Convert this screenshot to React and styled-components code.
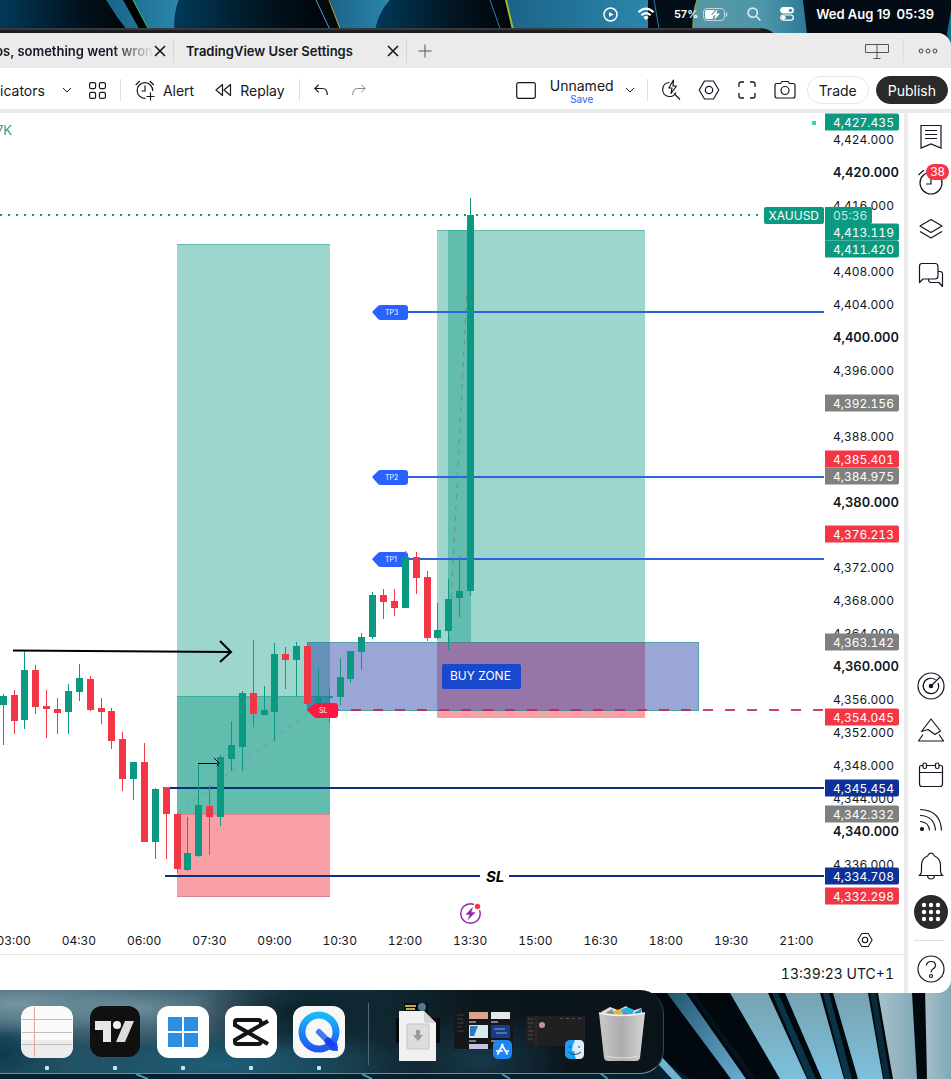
import styled, { createGlobalStyle } from "styled-components";

const UP = "#0b9981";
const DOWN = "#f23645";

// x, high, body top, body bottom, low, rising
const candles = [
  [3, 694, 696, 705, 745, 1],
  [14, 690, 695, 721, 734, 0],
  [24, 651, 670, 720, 729, 1],
  [35, 665, 670, 707, 714, 0],
  [46, 690, 706, 709, 738, 0],
  [57, 698, 709, 713, 734, 0],
  [68, 684, 691, 712, 734, 1],
  [79, 664, 678, 692, 701, 1],
  [90, 676, 679, 710, 711, 0],
  [101, 698, 708, 712, 724, 0],
  [111, 708, 711, 741, 749, 0],
  [122, 732, 739, 779, 791, 0],
  [133, 762, 762, 779, 800, 1],
  [144, 743, 762, 842, 842, 0],
  [155, 788, 789, 842, 859, 1],
  [166, 787, 787, 814, 859, 0],
  [177, 813, 814, 869, 873, 0],
  [187, 817, 853, 870, 871, 1],
  [198, 763, 805, 856, 857, 1],
  [209, 785, 806, 817, 855, 0],
  [220, 755, 757, 817, 826, 1],
  [231, 721, 745, 759, 771, 1],
  [242, 691, 693, 747, 771, 1],
  [253, 640, 693, 714, 727, 0],
  [264, 686, 710, 715, 715, 1],
  [274, 643, 654, 712, 741, 1],
  [285, 647, 654, 660, 689, 0],
  [296, 642, 646, 660, 697, 1],
  [307, 642, 646, 704, 708, 0],
  [318, 668, 696, 705, 708, 1],
  [329, 688, 696, 698, 722, 1],
  [340, 658, 677, 697, 705, 1],
  [350, 651, 651, 679, 683, 1],
  [361, 633, 637, 652, 670, 1],
  [372, 592, 595, 637, 639, 1],
  [383, 589, 595, 602, 619, 0],
  [394, 589, 601, 608, 616, 0],
  [405, 551, 557, 608, 608, 1],
  [416, 552, 557, 578, 594, 0],
  [427, 571, 577, 638, 641, 0],
  [437, 603, 630, 638, 639, 1],
  [448, 579, 599, 631, 650, 1],
  [459, 556, 591, 598, 617, 1],
  [470, 198, 215, 591, 596, 1],
];

const ticks = [
  4424, 4420, 4416, 4408, 4404, 4400, 4396, 4388, 4380, 4372, 4368, 4364, 4360,
  4356, 4352, 4348, 4344, 4340, 4336,
];

const priceTags = [
  { text: "4,427.435", y: 9, color: UP },
  { text: "4,413.119", y: 119, color: UP },
  { text: "4,411.420", y: 136, color: UP },
  { text: "4,392.156", y: 290, color: "#808080" },
  { text: "4,385.401", y: 346, color: DOWN },
  { text: "4,384.975", y: 363, color: "#808080" },
  { text: "4,376.213", y: 421, color: DOWN },
  { text: "4,363.142", y: 529, color: "#808080" },
  { text: "4,354.045", y: 604, color: DOWN },
  { text: "4,345.454", y: 675, color: "#0c3299" },
  { text: "4,342.332", y: 701, color: "#808080" },
  { text: "4,334.708", y: 763, color: "#0c3299" },
  { text: "4,332.298", y: 783, color: DOWN },
];

const times = [
  "03:00", "04:30", "06:00", "07:30", "09:00", "10:30", "12:00",
  "13:30", "15:00", "16:30", "18:00", "19:30", "21:00",
];

const targets = [
  { name: "TP3", y: 312 },
  { name: "TP2", y: 477 },
  { name: "TP1", y: 559 },
];

const priceToY = (price) => Math.round(59 + (4420 - price) * 8.2375);
const formatPrice = (price) => `4,${price - 4000}.000`;

function Wallpaper() {
  return (
    <Backdrop viewBox="0 0 951 1079" preserveAspectRatio="none" aria-hidden="true">
      <defs>
        <linearGradient id="deep" x1="0" x2="1">
          <stop offset="0" stopColor="#003a58" />
          <stop offset=".6" stopColor="#02131f" />
          <stop offset="1" stopColor="#000407" />
        </linearGradient>
        <linearGradient id="band" x1="0" x2="1">
          <stop offset="0" stopColor="#1b6389" />
          <stop offset="1" stopColor="#2b86ab" />
        </linearGradient>
        <linearGradient id="mist" x1="0" x2="1">
          <stop offset="0" stopColor="#5897a4" />
          <stop offset=".6" stopColor="#4d96aa" />
          <stop offset="1" stopColor="#2a7797" />
        </linearGradient>
        <linearGradient id="ray" x1="0" y1="0" x2="0" y2="1">
          <stop offset="0" stopColor="#77a3b2" />
          <stop offset="1" stopColor="#7cc0dc" />
        </linearGradient>
        <linearGradient id="pale" x1="0" x2="1">
          <stop offset="0" stopColor="#a8c0c8" />
          <stop offset="1" stopColor="#7fa9b8" />
        </linearGradient>
        <linearGradient id="steel" x1="0" y1="0" x2="1" y2="1">
          <stop offset="0" stopColor="#23566e" />
          <stop offset="1" stopColor="#69aed3" />
        </linearGradient>
      </defs>
      <rect width="951" height="1079" fill="#01080e" />
      <rect width="130" height="34" fill="url(#deep)" />
      <path d="M106 0H179Q173 14 175 34H130Q117 18 106 0Z" fill="url(#band)" />
      <path d="M175 34Q173 14 179 0H316L332 34Z" fill="url(#deep)" />
      <path d="M330 0H390Q377 14 375 34H340Z" fill="url(#band)" />
      <path d="M375 34Q377 14 390 0H507L514 34Z" fill="url(#deep)" />
      <path d="M123 0H133L151 34H142Z" fill="#000" />
      <path d="M133 0L151 34" stroke="#40c463" />
      <path d="M316 0H329L342 34H332Z" fill="#05090a" />
      <path d="M316 0L332 34" stroke="#4d9fdb" />
      <path d="M329 0L342 34" stroke="#c9a63a" />
      <path d="M506 0H648V34H514Z" fill="url(#band)" />
      <path d="M506 0L514 34" stroke="#96bd33" strokeWidth="2" />
      <path d="M490 0L502 34" stroke="#357fae" />
      <path d="M648 0H697L693 34H661Z" fill="#020e18" />
      <path d="M654 0L660 34" stroke="#2e7ea8" />
      <path d="M697 0H803L810 34H693Q692 12 697 0Z" fill="url(#mist)" />
      <path d="M697 0Q692 12 693 34" stroke="#8aa636" fill="none" />
      <path d="M803 0H951V60H810Z" fill="#030c14" />
      <path d="M951 10V50L947 34Z" fill="#1c6e90" />

      <path d="M0 1060H663L690 1079H0Z" fill="#06202e" />
      <path d="M136 1074L148 1079M362 1074L372 1079M502 1074L510 1079M600 1073L608 1079" stroke="#4d93ad" strokeWidth="2" />
      <path d="M661 1056L682 1079H672L658 1064Z" fill="#6fb3cf" />
      <path d="M667 993H686L746 1079H731Z" fill="url(#steel)" />
      <path d="M730 993H768L807 1079H780Z" fill="url(#ray)" />
      <path d="M785 993H820L844 1079H822Z" fill="url(#ray)" />
      <path d="M833 993H868L883 1079H858Z" fill="url(#ray)" />
      <path d="M878 993H912L917 1079H893Z" fill="url(#pale)" />
      <path d="M924 940H951V1079H927Z" fill="url(#pale)" />
      <path d="M772 993H778L816 1079H808Z" fill="#0a3448" />
      <path d="M823 993H829L852 1079H845Z" fill="#0a3448" />
      <path d="M870 993H876L890 1079H884Z" fill="#082b3b" />
      <path d="M690 993H694L756 1079H750Z" fill="#04141f" />
      <path d="M0 34V28H758Q770 28 774 34Z" fill="#1b1c20" />
      <path d="M0 29H760" stroke="#55585d" fill="none" />
    </Backdrop>
  );
}

function Plot() {
  return (
    <PlotSvg role="img" aria-label="XAUUSD candlestick chart">
      <g transform="translate(0 -113)">
        <path d="M0 215H470M476 215H764" stroke={UP} strokeWidth="2" strokeDasharray="2 6" />

        <rect x="177" y="244" width="153" height="570" fill={UP} fillOpacity=".4" />
        <rect x="177" y="696" width="153" height="118" fill={UP} fillOpacity=".4" />
        <rect x="177" y="814" width="153" height="83" fill={DOWN} fillOpacity=".47" />
        <path d="M177 244.500H330M177 696.500H330" stroke={UP} strokeOpacity=".4" />
        <path d="M177 814.500H330M177 896.500H330" stroke="#b06a76" strokeOpacity=".5" />

        <rect x="437" y="230" width="208" height="412" fill={UP} fillOpacity=".4" />
        <rect x="448" y="230" width="23" height="412" fill={UP} fillOpacity=".4" />
        <rect x="437" y="642" width="208" height="76" fill={DOWN} fillOpacity=".47" />
        <path d="M437 230.500H645" stroke={UP} strokeOpacity=".4" />

        <rect x="307" y="642" width="392" height="69" fill="#2844a8" fillOpacity=".47" />
        <path d="M307 642.500H698.500V710.500H307" stroke={UP} strokeOpacity=".5" fill="none" />
        <line x1="338" x2="100%" y1="710" y2="710" stroke="#c41f50" strokeOpacity=".85" strokeWidth="2" strokeDasharray="10 12" strokeDashoffset="-13" />

        <path d="M177 813L330 696" stroke="#8b8f8f" strokeDasharray="5 5" />
        <path d="M449 642L470 230" stroke="#6f8f8a" strokeDasharray="5 6" />

        <line x1="170" x2="100%" y1="788" y2="788" stroke="#0d2f80" strokeWidth="2" />
        <path d="M165 876H480" stroke="#0d2f80" strokeWidth="2" />
        <line x1="509" x2="100%" y1="876" y2="876" stroke="#0d2f80" strokeWidth="2" />
        <SlText x="486" y="882">SL</SlText>

        {targets.map((t) => (
          <g key={t.name}>
            <line x1="405" x2="100%" y1={t.y} y2={t.y} stroke="#2f62e0" strokeWidth="2" />
            <path
              d={`M372 ${t.y}L378 ${t.y - 6}Q379 ${t.y - 7} 381 ${t.y - 7}H405Q408 ${t.y - 7} 408 ${t.y - 4}V${t.y + 5}Q408 ${t.y + 8} 405 ${t.y + 8}H381Q379 ${t.y + 8} 378 ${t.y + 7}Z`}
              fill="#2962ff"
            />
            <TagText x="385" y={t.y + 3}>{t.name}</TagText>
          </g>
        ))}

        {candles.map(([x, high, top, bottom, low, rising]) => (
          <g key={x} fill={rising ? UP : DOWN}>
            <rect x={x} y={high} width="1" height={low - high} />
            <rect x={x - 3} y={top} width="7" height={Math.max(bottom - top, 1)} />
          </g>
        ))}

        <path d="M307 710L314 704Q315 703 317 703H335Q338 703 338 706V715Q338 718 335 718H317Q315 718 314 717Z" fill="#ff1744" />
        <TagText x="319" y="713">SL</TagText>

        <path d="M13 650.500L231 652M220 641L231 652L220 662" stroke="#000" strokeWidth="2" fill="none" />
        <path d="M198 763.500H217M214 758L219 763L217 766" stroke="#000" fill="none" />

        <rect x="442" y="664" width="79" height="25" rx="2" fill="#1848cc" />
        <ZoneText x="450" y="680">BUY ZONE</ZoneText>

        <circle cx="470.500" cy="913.500" r="9.800" fill="none" stroke="#8e24aa" strokeWidth="1.400" />
        <circle cx="477.500" cy="906.500" r="4" fill="#fff" />
        <circle cx="477.500" cy="906.500" r="2.700" fill="#f23645" />
        <path d="M472.500 907.500L466 914.500H470L468 919.500L475 912.500H471Z" fill="#8e24aa" stroke="#8e24aa" strokeWidth=".5" />
        <rect x="812" y="121" width="4" height="4" fill="#3fd69b" />
      </g>
    </PlotSvg>
  );
}

const Gear = ({ size = 22 }) => (
  <Glyph width={size} height={size} viewBox="0 0 22 22" $weight={size < 20 ? 1.5 : 1.2}>
    <path d="M6.500 2H15.500L20.800 11L15.500 20H6.500L1.200 11Z" strokeLinejoin="round" />
    <circle cx="11" cy="11" r="3.700" />
  </Glyph>
);

const Chevron = () => (
  <Glyph width="10" height="10" viewBox="0 0 10 10">
    <path d="M1 3L5 7L9 3" />
  </Glyph>
);

const Close = () => (
  <Glyph width="12" height="12" viewBox="0 0 12 12" $weight={1.6}>
    <path d="M1 1L11 11M11 1L1 11" />
  </Glyph>
);

function MenuBar() {
  return (
    <Menu>
      <Glyph width="15" height="15" viewBox="0 0 15 15" $color="#fff" $weight={1.5}>
        <circle cx="7.500" cy="7.500" r="6.500" />
        <path d="M6 5L10.500 7.500L6 10Z" fill="#fff" stroke="none" />
      </Glyph>
      <Glyph width="18" height="14" viewBox="0 0 18 14" $color="#fff" $weight={2.2}>
        <path d="M1.500 5.200Q9 -2 16.500 5.200M4.400 8.300Q9 4 13.600 8.300" />
        <path d="M6.300 10.200Q9 8 11.700 10.200L9 13Z" fill="#fff" stroke="none" />
      </Glyph>
      <Charge>
        57%
        <Glyph width="25" height="13" viewBox="0 0 25 13" $color="#b9d5de">
          <rect x=".5" y=".5" width="21" height="12" rx="3.500" />
          <path d="M2 4Q2 2 4 2H12L8 7H11L9.500 11H4Q2 11 2 9Z" fill="#fff" stroke="none" />
          <path d="M14.500 1L9 7.200H12.500L11 12L17 5.500H13.500Z" fill="#fff" stroke="none" />
          <path d="M23.500 4.500V8.500" strokeWidth="1.500" />
        </Glyph>
      </Charge>
      <Glyph width="14" height="14" viewBox="0 0 14 14" $color="#d5e8ee" $weight={1.7}>
        <circle cx="5.700" cy="5.700" r="4.600" />
        <path d="M9 9L13.300 13.300" />
      </Glyph>
      <Glyph width="14" height="14" viewBox="0 0 14 14" $color="#fff" $weight={1.2}>
        <rect x=".7" y=".7" width="12.600" height="5.200" rx="2.600" fill="#fff" />
        <rect x=".7" y="8" width="12.600" height="5.200" rx="2.600" />
        <circle cx="10.400" cy="3.300" r="1.600" fill="#3a87a0" stroke="none" />
        <circle cx="3.600" cy="10.600" r="2" fill="#fff" stroke="none" />
      </Glyph>
      <Clock>
        <span>Wed Aug 19</span>
        <span>05:39</span>
      </Clock>
    </Menu>
  );
}

function TabBar() {
  return (
    <Tabs>
      <Tab>
        <FadedTitle>ps, something went wrong</FadedTitle>
        <IconButton aria-label="Close tab"><Close /></IconButton>
      </Tab>
      <Tab $wide>
        <TabTitle>TradingView User Settings</TabTitle>
        <IconButton aria-label="Close tab"><Close /></IconButton>
      </Tab>
      <NewTab aria-label="New tab">
        <Glyph width="14" height="14" viewBox="0 0 14 14" $color="#555">
          <path d="M7 .5V13.500M.5 7H13.500" />
        </Glyph>
      </NewTab>
      <TabTools>
        <IconButton aria-label="Layout sync">
          <Glyph width="24" height="16" viewBox="0 0 24 16" $color="#555">
            <path d="M.5 1.500H23.500V9.500H.5ZM12 1.500V15.500M8.500 15.500H15.500" />
          </Glyph>
        </IconButton>
        <Divider $space={14} $tall />
        <IconButton aria-label="More">
          <Glyph width="20" height="6" viewBox="0 0 20 6" $color="#444">
            <circle cx="3" cy="3" r="2" />
            <circle cx="10" cy="3" r="2" />
            <circle cx="17" cy="3" r="2" />
          </Glyph>
        </IconButton>
      </TabTools>
    </Tabs>
  );
}

function Toolbar() {
  return (
    <Tools>
      <ToolGroup $gap={17}>
        <ToolButton>icators</ToolButton>
        <IconButton aria-label="Favourite indicators"><Chevron /></IconButton>
        <IconButton aria-label="Templates">
          <Glyph width="17" height="17" viewBox="0 0 17 17" $weight={1.2}>
            <rect x=".6" y=".6" width="6" height="6" rx="1.500" />
            <rect x="10.400" y=".6" width="6" height="6" rx="1.500" />
            <rect x=".6" y="10.400" width="6" height="6" rx="1.500" />
            <rect x="10.400" y="10.400" width="6" height="6" rx="1.500" />
          </Glyph>
        </IconButton>
      </ToolGroup>
      <Divider $space={14} />
      <ToolGroup $gap={21}>
        <ToolButton>
          <Glyph width="20" height="21" viewBox="0 0 20 21" $weight={1.2}>
            <path d="M10.500 18.300A7.800 7.800 0 1 1 17.700 11M10 5.500V11H6.500M.7 5L4.700 1M14.800 1L18.800 5M15.500 12.500V20.500M11.500 16.500H19.500" />
          </Glyph>
          Alert
        </ToolButton>
        <ToolButton>
          <Glyph width="17" height="14" viewBox="0 0 17 14" $weight={1.2}>
            <path d="M7.500 1.500V12.500L1 7ZM15.500 1.500V12.500L9 7Z" strokeLinejoin="round" />
          </Glyph>
          Replay
        </ToolButton>
      </ToolGroup>
      <Divider $space={14} />
      <ToolGroup $gap={24}>
        <IconButton aria-label="Undo">
          <Glyph width="14" height="12" viewBox="0 0 14 12" $weight={1.2}>
            <path d="M4.700 .7L.9 4.500L4.700 8.300M1 4.500H8.500Q13.300 4.500 13.300 11" />
          </Glyph>
        </IconButton>
        <IconButton aria-label="Redo">
          <Glyph width="14" height="12" viewBox="0 0 14 12" $color="#888">
            <path d="M9.300 .7L13.100 4.500L9.300 8.300M13 4.500H5.500Q.7 4.500 .7 11" />
          </Glyph>
        </IconButton>
      </ToolGroup>

      <ToolEnd>
        <IconButton aria-label="Select layout">
          <Glyph width="20" height="18" viewBox="0 0 20 18" $weight={1.2}>
            <rect x=".7" y="1.700" width="18.600" height="15.600" rx="2" />
          </Glyph>
        </IconButton>
        <LayoutName>
          Unnamed
          <small>Save</small>
        </LayoutName>
        <IconButton aria-label="Manage layouts"><Chevron /></IconButton>
        <Divider $space={12} />
        <ToolGroup $gap={16}>
          <IconButton aria-label="Quick search">
            <Glyph width="22" height="22" viewBox="0 0 22 22" $weight={1.2}>
              <path d="M9.500 3.500A7 7 0 1 0 16 13.500M14 14.500L20 20.500M13.500 1L8.800 9H12L11 14.500L16.500 7H13Z" strokeLinejoin="round" />
            </Glyph>
          </IconButton>
          <IconButton aria-label="Settings"><Gear /></IconButton>
          <IconButton aria-label="Fullscreen">
            <Glyph width="22" height="22" viewBox="0 0 22 22" $weight={1.3}>
              <path d="M3 8V5Q3 3 5 3H8M14 3H17Q19 3 19 5V8M19 14V17Q19 19 17 19H14M8 19H5Q3 19 3 17V14" />
            </Glyph>
          </IconButton>
          <IconButton aria-label="Take a snapshot">
            <Glyph width="22" height="22" viewBox="0 0 22 22" $weight={1.2}>
              <path d="M3 4.500H6.500L8 2.500H14L15.500 4.500H19Q21 4.500 21 6.500V17Q21 19 19 19H3Q1 19 1 17V6.500Q1 4.500 3 4.500Z" />
              <circle cx="11" cy="11.500" r="4" />
            </Glyph>
          </IconButton>
        </ToolGroup>
        <PillRow>
          <Pill>Trade</Pill>
          <Pill $dark>Publish</Pill>
        </PillRow>
      </ToolEnd>
    </Tools>
  );
}

function Sidebar() {
  return (
    <Side>
      <SideGroup>
        <SideButton aria-label="Watchlist">
          <Glyph width="22" height="26" viewBox="0 0 22 26" $weight={1.2}>
            <path d="M1 1.500H21V24L11 20L1 24ZM5 6.500H17M5 10.500H17M5 14.500H17" />
          </Glyph>
        </SideButton>
        <SideButton aria-label="Alerts">
          <Glyph width="26" height="26" viewBox="0 0 26 26" $weight={1.2}>
            <circle cx="13" cy="13" r="11" />
            <path d="M13 7V14H8M.5 5L6 0" />
          </Glyph>
          <Badge>38</Badge>
        </SideButton>
        <SideButton aria-label="Object tree">
          <Glyph width="26" height="22" viewBox="0 0 26 22" $weight={1.2}>
            <path d="M13 1.500L24 8L13 14.500L2 8ZM2 13.500L13 20L24 13.500" strokeLinejoin="round" />
          </Glyph>
        </SideButton>
        <SideButton aria-label="Chats">
          <Glyph width="26" height="26" viewBox="0 0 26 26" $weight={1.2}>
            <path d="M4 1.500H17Q20 1.500 20 4.500V14Q20 17 17 17H5L1.500 20.500V4.500Q1.500 1.500 4 1.500ZM20 9.500H22Q24.500 9.500 24.500 12V24.500L21 20.500H13Q10.500 20.500 10.500 17" strokeLinejoin="round" />
          </Glyph>
        </SideButton>
      </SideGroup>
      <SideGroup>
        <SideButton $h={45} aria-label="Screeners">
          <Glyph width="28" height="28" viewBox="0 0 28 28" $weight={1.2}>
            <circle cx="14" cy="14" r="13" />
            <path d="M18.500 7.800A7.700 7.700 0 1 0 21 11M14 14L23 5" />
            <circle cx="14" cy="14" r="1.700" fill="#131722" />
          </Glyph>
        </SideButton>
        <SideButton $h={45} aria-label="Pine editor">
          <Glyph width="28" height="26" viewBox="0 0 28 26" $weight={1.2}>
            <path d="M14 1L4.500 13.500L11 11.500L18 16.500L23.500 13ZM6 16.500L1.500 23H26.500L22 16.500" strokeLinejoin="round" />
          </Glyph>
        </SideButton>
        <SideButton $h={45} aria-label="Calendars">
          <Glyph width="26" height="28" viewBox="0 0 26 28" $weight={1.2}>
            <path d="M5 3.500H3.500Q1.500 3.500 1.500 5.500V22Q1.500 24.500 4 24.500H22Q24.500 24.500 24.500 22V5.500Q24.500 3.500 22.500 3.500H21M8.500 3.500H17.500M1.500 10.500H24.500" />
            <rect x="5" y="1" width="3.500" height="5.500" rx="1.500" />
            <rect x="17.500" y="1" width="3.500" height="5.500" rx="1.500" />
          </Glyph>
        </SideButton>
        <SideButton $h={45} aria-label="News">
          <Glyph width="24" height="26" viewBox="0 0 24 26" $weight={1.2}>
            <path d="M1 1.500Q21.500 2 22.500 22.500M1 7.500Q15.500 8 16.500 22.500M1 13.500Q10 14 10.500 22.500" />
            <circle cx="3" cy="21" r="1.500" fill="#131722" />
          </Glyph>
        </SideButton>
        <SideButton $h={45} aria-label="Notifications">
          <Glyph width="26" height="28" viewBox="0 0 26 28" $weight={1.2}>
            <path d="M1.500 23.500Q3.500 22 3.500 19V13Q4 6 9.500 4Q11 1.200 13 1.200Q15 1.200 16.500 4Q22 6 22.500 13V19Q22.500 22 24.500 23.500ZM9.500 24Q10 27 13 27Q16 27 16.500 24" />
          </Glyph>
        </SideButton>
        <SideButton $h={48} aria-label="All products">
          <svg width="34" height="34" viewBox="0 0 34 34" fill="#fff">
            <circle cx="17" cy="17" r="17" fill="#2a2a2a" />
            {[10, 17, 24].map((y) => [10, 17, 24].map((x) => <circle key={x + "-" + y} cx={x} cy={y} r="2.200" />))}
          </svg>
        </SideButton>
        <SideRule />
        <SideButton $h={48} aria-label="Help">
          <Glyph width="28" height="28" viewBox="0 0 28 28" $weight={1.2}>
            <circle cx="14" cy="14" r="13" />
            <path d="M9.500 10.500Q9.500 6.500 14 6.500Q18.500 6.500 18.500 10.200Q18.500 12.500 16 14Q14 15.300 14 17.500" />
            <circle cx="14" cy="21" r="1.500" />
          </Glyph>
        </SideButton>
      </SideGroup>
    </Side>
  );
}

function Chart() {
  return (
    <ChartPane>
      <PlotRow>
        <PlotArea>
          <Plot />
          <Legend>7K</Legend>
          <SymbolTag>XAUUSD</SymbolTag>
        </PlotArea>
        <PriceAxis>
          {ticks.map((price) => (
            <Tick key={price} $bold={price % 20 === 0} style={{ top: priceToY(price) }}>
              {formatPrice(price)}
            </Tick>
          ))}
          <Countdown>05:36</Countdown>
          {priceTags.map((tag) => (
            <PriceTag key={tag.text} $color={tag.color} style={{ top: tag.y }}>
              {tag.text}
            </PriceTag>
          ))}
        </PriceAxis>
      </PlotRow>
      <TimeRow>
        <TimeAxis>
          {times.map((time) => (
            <span key={time}>{time}</span>
          ))}
        </TimeAxis>
        <AxisSettings aria-label="Axis settings"><Gear size={16} /></AxisSettings>
      </TimeRow>
      <StatusBar>13:39:23 UTC+1</StatusBar>
    </ChartPane>
  );
}

const dockApps = [
  {
    name: "Notes",
    art: (
      <>
        <rect width="52" height="52" rx="12" fill="#fafafa" />
        <path d="M0 34H52V40Q52 52 40 52H12Q0 52 0 40Z" fill="#ececec" />
        <path d="M1 13.500H51M1 26.500H51M1 38.500H51" stroke="#bdbdbd" />
        <path d="M13.500 1V51" stroke="#e8a0a0" />
      </>
    ),
  },
  {
    name: "TradingView",
    art: (
      <>
        <rect x="1" width="50" height="51" rx="12" fill="#101010" />
        <path d="M6 15H22V36H14V24H6Z" fill="#e6e6e6" />
        <circle cx="28" cy="19" r="4" fill="#f2f2f2" />
        <path d="M36 15H45L36 36H27Z" fill="#dcdcdc" />
      </>
    ),
  },
  {
    name: "Windows App",
    art: (
      <>
        <rect width="52" height="52" rx="12" fill="#fff" />
        <path d="M11 11H25V25H11ZM27 11H41V25H27ZM11 27H25V41H11ZM27 27H41V41H27Z" fill="#2b8ee0" />
      </>
    ),
  },
  {
    name: "CapCut",
    art: (
      <>
        <rect width="52" height="52" rx="12" fill="#fff" />
        <path d="M43 15L10 34V36Q10 38 12 38H33Q36 38 36 35V34M43 38L10 19V16Q10 14 12 14H33Q36 14 36 17V19" fill="none" stroke="#151515" strokeWidth="4" />
      </>
    ),
  },
  {
    name: "QuickTime Player",
    art: (
      <>
        <defs>
          <linearGradient id="quick" x1="0" y1="0" x2="0" y2="1">
            <stop offset="0" stopColor="#18b9fa" />
            <stop offset="1" stopColor="#1f57f2" />
          </linearGradient>
        </defs>
        <rect width="52" height="52" rx="12" fill="#f7f7f8" />
        <circle cx="26" cy="26" r="17" fill="none" stroke="url(#quick)" strokeWidth="7" />
        <path d="M26 26L33 33" stroke="#3f7bf5" strokeWidth="6" strokeLinecap="round" />
        <path d="M35 35L41 41" stroke="#1d3df2" strokeWidth="7" strokeLinecap="round" />
        <path d="M36 44L45 45L44 36Z" fill="#2046f0" />
      </>
    ),
  },
];

function Dock() {
  return (
    <DockArea>
      <DockPanel>
        {dockApps.map((app) => (
          <DockApp key={app.name} href="#" aria-label={app.name}>
            <svg width="52" height="52" viewBox="0 0 52 52">{app.art}</svg>
            <Running />
          </DockApp>
        ))}
        <DockRule />
        <DockTiles>
          <a href="#" aria-label="Downloads">
            <svg width="46" height="62" viewBox="0 0 46 62">
              <rect y="15" width="44" height="25" fill="#07090b" />
              <path d="M8 0H32V12H8Z" fill="#090c10" />
              <path d="M9 3H20M10 6H19" stroke="#c5a84c" strokeWidth="2" />
              <circle cx="26" cy="4" r="4" fill="#517894" />
              <path d="M3 8H28L40 20V58H3Z" fill="#f1f1f1" />
              <path d="M28 8V18Q28 20 30 20H40Z" fill="#d4d4d4" />
              <rect x="11" y="21" width="22" height="25" rx="1" fill="#dddddd" stroke="#c5c5c5" />
              <path d="M20 27H24V32H27L22 38L17 32H20Z" fill="#9a9a9a" />
            </svg>
          </a>
          <a href="#" aria-label="App Store window">
            <svg width="60" height="56" viewBox="0 -4 60 56">
              <rect y="2" width="59" height="37" fill="#15181b" />
              <path d="M3 5H10M3 9H9M3 13H10M3 17H8M3 21H10" stroke="#3c3f42" />
              <rect x="15" y="2" width="19" height="7" fill="#d9a48c" />
              <rect x="37" y="2" width="19" height="7" fill="#e5e7e7" />
              <rect x="15" y="15" width="19" height="13" fill="#d9e8ec" />
              <path d="M16 16H24L20 26H16Z" fill="#3178b4" />
              <rect x="37" y="15" width="19" height="13" fill="#153c86" />
              <path d="M40 19H51M42 23H53" stroke="#8ca9d6" />
              <path d="M15 12H22M37 12H44M15 31H22M37 31H44" stroke="#e2e2e2" />
              <rect x="15" y="34" width="19" height="5" fill="#c5c3dd" />
              <rect x="39" y="30" width="19" height="19" rx="5" fill="#1c86f3" />
              <path d="M49 34L43.500 44.500M47.500 34L53.500 44.500M42 41H49M52 41H55" stroke="#fff" strokeWidth="1.700" />
            </svg>
          </a>
          <a href="#" aria-label="Finder window">
            <svg width="60" height="56" viewBox="0 -4 60 56">
              <rect y="6" width="59" height="30" fill="#202022" />
              <path d="M2 9H7M2 13H8M2 17H6M2 21H8M2 25H7M2 29H7" stroke="#4a4a4c" />
              <path d="M10 6V36" stroke="#333" />
              <circle cx="16" cy="15" r="3" fill="#c88e9b" />
              <path d="M34 8.500H56" stroke="#555" strokeDasharray="3 3" />
              <rect x="39" y="30" width="19" height="19" rx="5" fill="#1ca0f6" />
              <path d="M49 30H53Q58 30 58 35V44Q58 49 53 49H50Q48 44 48.500 41H46Q46 35 49 30Z" fill="#dceefa" />
              <path d="M44 36V38M53 36V38M42.500 42Q48.500 47 55 42" stroke="#0d4377" fill="none" />
            </svg>
          </a>
          <a href="#" aria-label="Bin">
            <svg width="48" height="56" viewBox="0 0 48 56">
              <defs>
                <linearGradient id="bin" x1="0" x2="1">
                  <stop offset="0" stopColor="#c9c9c9" />
                  <stop offset=".5" stopColor="#adadad" />
                  <stop offset="1" stopColor="#d5d5d5" />
                </linearGradient>
              </defs>
              <path d="M3 6L12 1L20 4L28 0L34 5L43 2L45 9L36 12H8Z" fill="#ddd" />
              <path d="M6 8L14 3L17 9Z" fill="#8b8f93" />
              <path d="M16 5L23 3L24 10H17Z" fill="#e9b62c" />
              <path d="M23 4Q29 -1 36 4L34 10H25Z" fill="#28b7d8" />
              <path d="M26 5L32 9H27Z" fill="#e8488e" />
              <path d="M36 7L44 2L42 10Z" fill="#2e8bb8" />
              <path d="M1 7Q24 12 47 7L42 52Q41 55 38 55H10Q7 55 6 52Z" fill="url(#bin)" />
              <path d="M1 7Q24 12 47 7" stroke="#f2f2f2" fill="none" strokeWidth="1.500" />
              <path d="M8 50Q24 54 40 50" stroke="#e0e0e0" fill="none" />
            </svg>
          </a>
        </DockTiles>
      </DockPanel>
    </DockArea>
  );
}

export default function App() {
  return (
    <Desktop>
      <GlobalStyle />
      <Wallpaper />
      <Screen>
        <MenuBar />
        <Window>
          <TabBar />
          <Toolbar />
          <Body>
            <Chart />
            <Sidebar />
          </Body>
        </Window>
        <Dock />
      </Screen>
    </Desktop>
  );
}

const GlobalStyle = createGlobalStyle`
  * {
    box-sizing: border-box;
  }
  body {
    margin: 0;
    background: #01080e;
    color: #131722;
    font-family: Inter, "Liberation Sans", sans-serif;
    font-size: 14px;
  }
  button {
    padding: 0;
    border: none;
    background: none;
    color: inherit;
    font: inherit;
    cursor: pointer;
  }
  svg {
    display: block;
    flex-shrink: 0;
  }
`;
const Desktop = styled.div`
  display: grid;
  min-height: 100vh;
  overflow: hidden;
`;
const Backdrop = styled.svg`
  grid-area: 1 / 1;
  width: 100%;
  height: 100%;
  min-height: 0;
  contain: size;
`;
const Screen = styled.div`
  grid-area: 1 / 1;
  display: flex;
  flex-direction: column;
  min-width: 0;
  z-index: 1;
`;
const Glyph = styled.svg`
  fill: none;
  stroke: ${(props) => props.$color || "#131722"};
  stroke-width: ${(props) => props.$weight || 1};
`;
const Menu = styled.header`
  display: flex;
  justify-content: flex-end;
  align-items: center;
  gap: 19px;
  height: 33px;
  padding: 0 17px 5px 0;
  color: #fff;
`;
const Charge = styled.div`
  display: flex;
  align-items: center;
  gap: 5px;
  font-size: 11px;
  font-weight: 600;
`;
const Clock = styled.div`
  display: flex;
  gap: 6px;
  margin-left: 3px;
  font-size: 13px;
  font-weight: 600;
`;
const Window = styled.main`
  display: flex;
  flex: 1;
  flex-direction: column;
  border-radius: 0 14px 14px 0;
  background: #ebebeb;
  overflow: hidden;
`;
const Tabs = styled.nav`
  display: flex;
  align-items: center;
  height: 35px;
  background: #ebebeb;
`;
const Tab = styled.div`
  display: flex;
  justify-content: space-between;
  align-items: center;
  width: ${(props) => (props.$wide ? "233px" : "174px")};
  height: 24px;
  padding: 0 7px 0 ${(props) => (props.$wide ? "12px" : "0")};
  border-right: 1px solid #d6d6d6;
  font-size: 13px;
  font-weight: 600;
`;
const TabTitle = styled.span`
  white-space: nowrap;
`;
const FadedTitle = styled(TabTitle)`
  width: 152px;
  text-indent: -5px;
  overflow: hidden;
  mask-image: linear-gradient(to right, #000 112px, transparent 154px);
`;
const NewTab = styled.button`
  padding: 0 11px;
`;
const TabTools = styled.div`
  display: flex;
  align-items: center;
  margin-left: auto;
  padding-right: 13px;
`;
const Divider = styled.span`
  width: 1px;
  height: ${(props) => (props.$tall ? "24px" : "22px")};
  margin: 0 ${(props) => props.$space}px;
  background: #dedede;
`;
const Tools = styled.div`
  display: flex;
  align-items: center;
  height: 41px;
  padding: 3px 3px 0 0;
  background: #fff;
`;
const ToolGroup = styled.div`
  display: flex;
  align-items: center;
  gap: ${(props) => props.$gap}px;
`;
const IconButton = styled.button`
  display: flex;
  align-items: center;
`;
const ToolButton = styled.button`
  display: flex;
  align-items: center;
  gap: 8px;
  font-size: 14px;
`;
const ToolEnd = styled.div`
  display: flex;
  align-items: center;
  margin-left: auto;
`;
const LayoutName = styled.button`
  display: flex;
  flex-direction: column;
  align-items: center;
  margin: 0 11px 0 14px;
  padding-top: 2px;
  font-size: 14px;
  line-height: 16px;

  small {
    color: #2962ff;
    font-size: 10px;
    line-height: 10px;
  }
`;
const PillRow = styled.div`
  display: flex;
  gap: 7px;
  margin-left: 11px;
`;
const Pill = styled.button`
  height: 28px;
  padding: 0 11px;
  border: 1px solid ${(props) => (props.$dark ? "#2a2a2a" : "#e6e6e6")};
  border-radius: 14px;
  background: ${(props) => (props.$dark ? "#2a2a2a" : "#fff")};
  color: ${(props) => (props.$dark ? "#fff" : "#131722")};
  font-size: 14px;
`;
const Body = styled.div`
  display: flex;
  flex: 1;
  gap: 4px;
  padding-top: 4px;
`;
const ChartPane = styled.section`
  display: flex;
  flex: 1;
  flex-direction: column;
  min-width: 0;
  background: #fff;
`;
const PlotRow = styled.div`
  display: flex;
  flex: 1;
  min-height: 813px;
`;
const PlotArea = styled.div`
  position: relative;
  flex: 1;
  min-width: 0;
  padding-right: 1px;
`;
const PlotSvg = styled.svg`
  width: 100%;
  height: 100%;
`;
const Legend = styled.span`
  position: absolute;
  top: 9px;
  left: -4px;
  color: #3d9a80;
  font-size: 13px;
  line-height: 16px;
`;
const SlText = styled.text`
  font-size: 15px;
  font-style: italic;
  font-weight: 700;
`;
const TagText = styled.text`
  fill: #fff;
  font-size: 7px;
`;
const ZoneText = styled.text`
  fill: #fff;
  font-size: 12px;
`;
const PriceAxis = styled.div`
  position: relative;
  width: 79px;
  font-size: 12px;
  font-variant-numeric: tabular-nums;
`;
const Tick = styled.span`
  position: absolute;
  left: 8px;
  font-size: ${(props) => (props.$bold ? "13px" : "12px")};
  font-weight: ${(props) => (props.$bold ? 600 : 400)};
  line-height: 17px;
  transform: translateY(-50%);
`;
const PriceTag = styled.span`
  position: absolute;
  left: 0;
  width: 74px;
  padding-left: 8px;
  border-radius: 0 2px 2px 0;
  background: ${(props) => props.$color};
  color: #fff;
  line-height: 17px;
  transform: translateY(-50%);
`;
const Countdown = styled.span`
  position: absolute;
  top: 94px;
  left: 0;
  width: 47px;
  padding-left: 8px;
  border-radius: 0 2px 2px 0;
  background: ${UP};
  color: #c4e9e1;
  line-height: 17px;
`;
const SymbolTag = styled.span`
  position: absolute;
  top: 94px;
  right: 1px;
  padding: 0 5px;
  border-radius: 2px;
  background: ${UP};
  color: #fff;
  font-size: 12px;
  line-height: 17px;
`;
const TimeRow = styled.div`
  display: flex;
  align-items: center;
  height: 29px;
  border-bottom: 1px solid #e4e4e4;
`;
const TimeAxis = styled.div`
  display: grid;
  flex: 1;
  grid-template-columns: repeat(13, 1fr);
  margin: 0 -4px 0 -19px;
  font-size: 12px;
  font-variant-numeric: tabular-nums;
  text-align: center;
`;
const AxisSettings = styled.button`
  display: flex;
  justify-content: center;
  width: 79px;
`;
const StatusBar = styled.footer`
  height: 38px;
  padding-right: 10px;
  font-size: 14px;
  font-variant-numeric: tabular-nums;
  line-height: 38px;
  text-align: right;
`;
const Side = styled.aside`
  display: flex;
  flex-direction: column;
  justify-content: space-between;
  width: 43px;
  padding-top: 1px;
  background: #fff;
`;
const SideGroup = styled.div`
  display: flex;
  flex-direction: column;
`;
const SideButton = styled.button`
  position: relative;
  display: flex;
  justify-content: center;
  align-items: center;
  height: ${(props) => props.$h || 46}px;
  padding-left: 3px;
`;
const SideRule = styled.span`
  height: 1px;
  margin: 4px 6px;
  background: #e0e0e0;
`;
const Badge = styled.span`
  position: absolute;
  top: 4px;
  right: 2px;
  padding: 0 4px;
  border-radius: 8px;
  background: ${DOWN};
  color: #fff;
  font-size: 12px;
  line-height: 16px;
`;
const DockArea = styled.footer`
  display: flex;
  height: 89px;
  margin-top: -3px;
  z-index: 1;
`;
const DockPanel = styled.nav`
  display: flex;
  align-items: center;
  gap: 16px;
  height: 84px;
  padding: 4px 17px 0 21px;
  border-bottom: 1px solid #6d8f9c;
  border-right: 1px solid #33474f;
  border-radius: 0 24px 24px 0;
  background:
    radial-gradient(ellipse 110px 40px at 300px 22px, #0a2029, transparent),
    radial-gradient(ellipse 190px 40px at 130px 18px, #6d8d99, transparent),
    radial-gradient(ellipse 120px 30px at 20px 14px, #7c99a5, transparent),
    radial-gradient(ellipse 70px 40px at 0 65px, #0f3a4e, transparent),
    radial-gradient(ellipse 200px 40px at 220px 75px, #1e5f78, transparent),
    radial-gradient(ellipse 90px 50px at 480px 70px, #17394a, transparent),
    linear-gradient(to right, #27566a, #14303c 340px, #0b171d 480px, #0a1318);
`;
const DockApp = styled.a`
  display: flex;
  flex-direction: column;
  align-items: center;
  gap: 8px;
  padding-top: 8px;
`;
const Running = styled.span`
  width: 4px;
  height: 4px;
  border-radius: 1px;
  background: #bfe9f2;
`;
const DockRule = styled.span`
  width: 1px;
  height: 62px;
  margin: 0 11px 0 7px;
  background: #54686f;
`;
const DockTiles = styled.div`
  display: flex;
  align-items: center;
  gap: 12px;
`;
